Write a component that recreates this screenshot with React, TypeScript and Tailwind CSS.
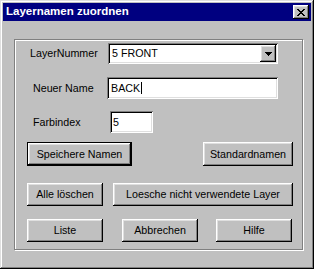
import React from 'react';

const raised =
  'shadow-[inset_-1px_-1px_0_#000,inset_1px_1px_0_#fff,inset_-2px_-2px_0_#808080,inset_2px_2px_0_#dfdfdf]';
const sunken =
  'shadow-[inset_1px_1px_0_#808080,inset_-1px_-1px_0_#fff,inset_2px_2px_0_#000,inset_-2px_-2px_0_#dfdfdf]';

const Btn: React.FC<{ label: string; className?: string }> = ({ label, className = '' }) => (
  <button
    className={`flex items-center justify-center bg-[#c0c0c0] text-black ${raised} ${className}`}
  >
    {label}
  </button>
);

const App: React.FC = () => {
  return (
    <div
      className="w-[314px] h-[269px] bg-[#c0c0c0] p-[3px] text-[10.7px] text-black shadow-[inset_-1px_-1px_0_#000,inset_1px_1px_0_#dfdfdf,inset_-2px_-2px_0_#808080,inset_2px_2px_0_#fff]"
      style={{ fontFamily: '"Liberation Sans", Arial, sans-serif' }}
    >
      {/* title bar */}
      <div className="h-[18px] bg-[#000080] flex items-center justify-between pl-[3px] pr-[2px]">
        <span className="text-white font-bold text-[11.5px] leading-none">Layernamen zuordnen</span>
        <button className={`w-[16px] h-[14px] bg-[#c0c0c0] flex items-center justify-center ${raised}`}>
          <svg width="8" height="7" viewBox="0 0 8 7" shapeRendering="crispEdges">
            <path
              d="M0 0h2v1h-2zM6 0h2v1h-2zM1 1h2v1h-2zM5 1h2v1h-2zM2 2h4v1h-4zM3 3h2v1h-2zM2 4h4v1h-4zM1 5h2v1h-2zM5 5h2v1h-2zM0 6h2v1h-2zM6 6h2v1h-2z"
              fill="#000"
            />
          </svg>
        </button>
      </div>

      {/* group box */}
      <div className="ml-[11px] mt-[18px] w-[289px] h-[211px] border border-[#808080] shadow-[1px_1px_0_#fff,inset_1px_1px_0_#fff] flex flex-col">
        <div className="mt-[3px] h-[21px] flex items-center">
          <span className="ml-[15px] w-[78px]">LayerNummer</span>
          <div className={`w-[170px] h-[21px] bg-white flex items-center p-[2px] ${sunken}`}>
            <span className="flex-1 pl-[2px]">5 FRONT</span>
            <div className={`w-[16px] h-[17px] bg-[#c0c0c0] flex items-center justify-center ${raised}`}>
              <svg width="7" height="4" viewBox="0 0 7 4" shapeRendering="crispEdges">
                <path d="M0 0h7v1h-7zM1 1h5v1h-5zM2 2h3v1h-3zM3 3h1v1h-1z" fill="#000" />
              </svg>
            </div>
          </div>
        </div>

        <div className="mt-[13px] h-[22px] flex items-center">
          <span className="ml-[18px] w-[74px]">Neuer Name</span>
          <div className={`w-[171px] h-[22px] bg-white flex items-center pl-[4px] ${sunken}`}>
            <span>BACK</span>
            <span className="w-px h-[12px] bg-black ml-px" />
          </div>
        </div>

        <div className="mt-[12px] h-[22px] flex items-center">
          <span className="ml-[18px] w-[77px]">Farbindex</span>
          <div className={`w-[43px] h-[22px] bg-white flex items-center pl-[3px] ${sunken}`}>
            <span>5</span>
          </div>
        </div>

        <div className="mt-[9px] h-[24px] flex items-center">
          <div className="ml-[12px] w-[105px] h-[24px] border border-black">
            <Btn label="Speichere Namen" className="w-full h-full" />
          </div>
          <Btn label="Standardnamen" className="ml-[71px] w-[90px] h-[24px]" />
        </div>

        <div className="mt-[17px] h-[23px] flex items-center">
          <Btn label="Alle löschen" className="ml-[12px] w-[76px] h-[23px]" />
          <Btn label="Loesche nicht verwendete Layer" className="ml-[10px] w-[180px] h-[23px]" />
        </div>

        <div className="mt-[13px] h-[23px] flex items-center">
          <Btn label="Liste" className="ml-[12px] w-[76px] h-[23px]" />
          <Btn label="Abbrechen" className="ml-[19px] w-[76px] h-[23px]" />
          <Btn label="Hilfe" className="ml-[18px] w-[76px] h-[23px]" />
        </div>
      </div>
    </div>
  );
};

export default App;
